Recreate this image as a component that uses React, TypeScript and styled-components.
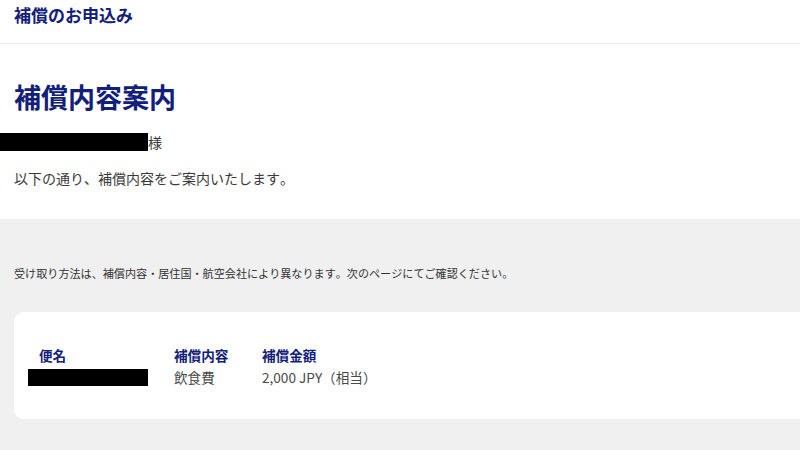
import styled, { createGlobalStyle } from "styled-components";

const GlobalStyle = createGlobalStyle`
  html, body {
    margin: 0;
    padding: 0;
    background: #ffffff;
    overflow-x: hidden;
  }
  body {
    font-family: "Noto Sans CJK JP", "Noto Sans", sans-serif;
    font-kerning: none;
    color: #333333;
  }
`;

const NAVY = "#12207b";

const Header = styled.header`
  height: 44px;
  padding: 3px 14px 0;
  box-sizing: border-box;
  border-bottom: 1px solid #ececec;
`;

const HeaderTitle = styled.div`
  font-size: 17px;
  line-height: 24px;
  font-weight: 700;
  color: ${NAVY};
`;

const Intro = styled.section`
  padding: 33px 0 31px;
`;

const PageTitle = styled.h1`
  margin: 0 0 15px 14px;
  font-size: 27px;
  line-height: 40px;
  font-weight: 700;
  color: ${NAVY};
`;

const Line = styled.p<{ $indent?: boolean }>`
  margin: 0;
  display: flex;
  align-items: center;
  font-size: 14px;
  line-height: 20px;
  color: #3a3a3a;
  padding-left: ${(p) => (p.$indent ? "14px" : "0")};

  & + & {
    margin-top: 16px;
  }
`;

const Redacted = styled.span<{ $width: number }>`
  display: inline-block;
  width: ${(p) => p.$width}px;
  height: 18px;
  background: #000000;
`;

const InfoArea = styled.section`
  background: #f0f0f0;
  padding: 45px 0 40px 14px;
`;

const Notice = styled.p`
  margin: 0 0 30px;
  font-size: 11.1px;
  line-height: 18px;
  color: #333333;
`;

const Card = styled.div`
  background: #ffffff;
  border-radius: 10px;
  margin-right: -20px;
  padding: 34px 0 32px 25px;
`;

const Grid = styled.div`
  display: grid;
  grid-template-columns: 135px 88px auto;
  row-gap: 3px;
`;

const Label = styled.div`
  font-size: 13.6px;
  line-height: 18px;
  font-weight: 700;
  color: ${NAVY};
`;

const Value = styled.div`
  font-size: 13.6px;
  line-height: 20px;
  color: #4a4a4a;
  display: flex;
  align-items: center;
`;

const FlightRedacted = styled(Redacted)`
  height: 17px;
  margin-left: -11px;
`;

export default function App() {
  return (
    <>
      <GlobalStyle />
      <Header>
        <HeaderTitle>補償のお申込み</HeaderTitle>
      </Header>
      <Intro>
        <PageTitle>補償内容案内</PageTitle>
        <Line>
          <Redacted $width={148} />
          <span>様</span>
        </Line>
        <Line $indent>以下の通り、補償内容をご案内いたします。</Line>
      </Intro>
      <InfoArea>
        <Notice>
          受け取り方法は、補償内容・居住国・航空会社により異なります。次のページにてご確認ください。
        </Notice>
        <Card>
          <Grid>
            <Label>便名</Label>
            <Label>補償内容</Label>
            <Label>補償金額</Label>
            <Value>
              <FlightRedacted $width={120} />
            </Value>
            <Value>飲食費</Value>
            <Value>2,000 JPY（相当）</Value>
          </Grid>
        </Card>
      </InfoArea>
    </>
  );
}
